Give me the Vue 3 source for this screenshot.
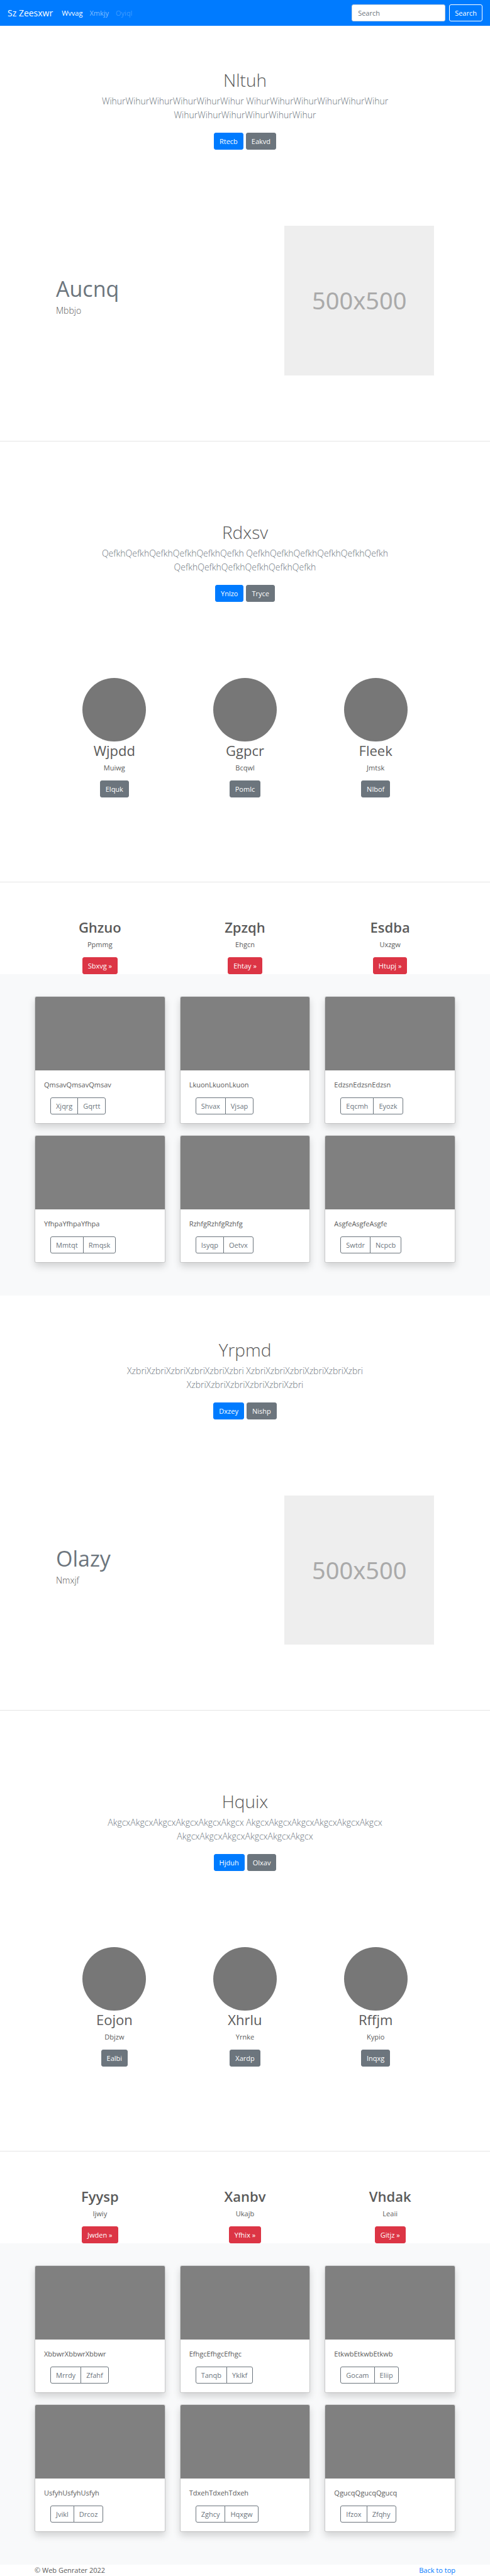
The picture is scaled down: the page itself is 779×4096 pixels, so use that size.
<script setup>
const blocks = [
  {
    hero: { title: 'Nltuh', word: 'Wihur', primary: 'Rtecb', secondary: 'Eakvd' },
    feature: { title: 'Aucnq', text: 'Mbbjo' },
    team: {
      hero: { title: 'Rdxsv', word: 'Qefkh', primary: 'Ynlzo', secondary: 'Tryce' },
      people: [
        { name: 'Wjpdd', text: 'Muiwg', action: 'Elquk' },
        { name: 'Ggpcr', text: 'Bcqwl', action: 'Pomlc' },
        { name: 'Fleek', text: 'Jmtsk', action: 'Nlbof' }
      ]
    },
    topics: [
      { name: 'Ghzuo', text: 'Ppmmg', action: 'Sbxvg' },
      { name: 'Zpzqh', text: 'Ehgcn', action: 'Ehtay' },
      { name: 'Esdba', text: 'Uxzgw', action: 'Htupj' }
    ],
    cards: [
      { word: 'Qmsav', actions: ['Xjqrg', 'Gqrtt'] },
      { word: 'Lkuon', actions: ['Shvax', 'Vjsap'] },
      { word: 'Edzsn', actions: ['Eqcmh', 'Eyozk'] },
      { word: 'Yfhpa', actions: ['Mmtqt', 'Rmqsk'] },
      { word: 'Rzhfg', actions: ['Isyqp', 'Oetvx'] },
      { word: 'Asgfe', actions: ['Swtdr', 'Ncpcb'] }
    ]
  },
  {
    hero: { title: 'Yrpmd', word: 'Xzbri', primary: 'Dxzey', secondary: 'Nishp' },
    feature: { title: 'Olazy', text: 'Nmxjf' },
    team: {
      hero: { title: 'Hquix', word: 'Akgcx', primary: 'Hjduh', secondary: 'Olxav' },
      people: [
        { name: 'Eojon', text: 'Dbjzw', action: 'Ealbi' },
        { name: 'Xhrlu', text: 'Yrnke', action: 'Xardp' },
        { name: 'Rffjm', text: 'Kypio', action: 'Inqxg' }
      ]
    },
    topics: [
      { name: 'Fyysp', text: 'Ijwiy', action: 'Jwden' },
      { name: 'Xanbv', text: 'Ukajb', action: 'Yfhix' },
      { name: 'Vhdak', text: 'Leaii', action: 'Gitjz' }
    ],
    cards: [
      { word: 'Xbbwr', actions: ['Mrrdy', 'Zfahf'] },
      { word: 'Efhgc', actions: ['Tanqb', 'Yklkf'] },
      { word: 'Etkwb', actions: ['Gocam', 'Eliip'] },
      { word: 'Usfyh', actions: ['Jvikl', 'Drcoz'] },
      { word: 'Tdxeh', actions: ['Zghcy', 'Hqxgw'] },
      { word: 'Qgucq', actions: ['Ifzox', 'Zfqhy'] }
    ]
  }
]

const lead = (word) => Array(3).fill(word.repeat(6)).join(' ')
</script>

<template>
  <div id="top" class="page">
    <header class="navbar">
      <a class="brand" href="#top">Sz Zeesxwr</a>
      <nav class="links">
        <a class="link active" href="#top">Wvvag</a>
        <a class="link" href="#top">Xmkjy</a>
        <a class="link disabled" href="#top" aria-disabled="true">Oyiql</a>
      </nav>
      <form class="search" @submit.prevent>
        <input class="field" type="search" placeholder="Search" aria-label="Search" />
        <button class="btn outline-light" type="submit">Search</button>
      </form>
    </header>

    <main>
      <template v-for="block in blocks" :key="block.hero.title">
        <section class="hero">
          <h1 class="title">{{ block.hero.title }}</h1>
          <p class="lead">{{ lead(block.hero.word) }}</p>
          <div class="actions">
            <a class="btn primary" href="#top">{{ block.hero.primary }}</a>
            <a class="btn secondary" href="#top">{{ block.hero.secondary }}</a>
          </div>
        </section>

        <section class="feature">
          <div class="feature-copy">
            <h2 class="feature-title">{{ block.feature.title }}</h2>
            <p class="feature-text">{{ block.feature.text }}</p>
          </div>
          <div class="feature-media">
            <div class="placeholder">500x500</div>
          </div>
        </section>

        <hr class="rule" />

        <section class="hero spaced">
          <h1 class="title">{{ block.team.hero.title }}</h1>
          <p class="lead">{{ lead(block.team.hero.word) }}</p>
          <div class="actions">
            <a class="btn primary" href="#top">{{ block.team.hero.primary }}</a>
            <a class="btn secondary" href="#top">{{ block.team.hero.secondary }}</a>
          </div>
        </section>

        <section class="people">
          <article v-for="p in block.team.people" :key="p.name" class="column">
            <div class="avatar"></div>
            <h2 class="name">{{ p.name }}</h2>
            <p class="text">{{ p.text }}</p>
            <a class="btn secondary" href="#top">{{ p.action }}</a>
          </article>
        </section>

        <hr class="rule" />

        <section class="topics">
          <article v-for="t in block.topics" :key="t.name" class="column">
            <h2 class="name strong">{{ t.name }}</h2>
            <p class="text">{{ t.text }}</p>
            <a class="btn danger" href="#top">{{ t.action }} »</a>
          </article>
        </section>

        <section class="album">
          <article v-for="c in block.cards" :key="c.word" class="card">
            <div class="thumb"></div>
            <div class="card-body">
              <p class="text">{{ c.word.repeat(3) }}</p>
              <div class="group">
                <button v-for="a in c.actions" :key="a" class="btn outline" type="button">{{ a }}</button>
              </div>
            </div>
          </article>
        </section>
      </template>
    </main>

    <footer class="footer">
      <span>© Web Genrater 2022</span>
      <a class="to-top" href="#top">Back to top</a>
    </footer>
  </div>
</template>

<style>
body {
  margin: 0;
  background: #fff;
}
</style>

<style scoped>
.page,
.page * {
  box-sizing: border-box;
}

.page {
  font-family: "Open Sans", "Noto Sans", sans-serif;
  font-size: 11px;
  line-height: 17px;
  color: #5a5a5a;
}

h1,
h2,
p {
  margin: 0;
}

a {
  text-decoration: none;
}

.navbar {
  display: flex;
  align-items: center;
  padding: 7px 12px;
  background: #007bff;
}

.brand {
  margin-right: 14px;
  font-size: 14px;
  color: #fff;
}

.links {
  display: flex;
  flex: 1;
  gap: 11px;
}

.link {
  color: rgba(255, 255, 255, 0.5);
}

.link.active {
  color: #fff;
}

.link.disabled {
  color: rgba(255, 255, 255, 0.25);
}

.search {
  display: flex;
  gap: 6px;
}

.field {
  width: 149px;
  height: 27px;
  padding: 0 9px;
  border: 1px solid #ced4da;
  border-radius: 3px;
  background: #fff;
  font: inherit;
  color: #495057;
  appearance: none;
}

.field::placeholder {
  color: #6c757d;
}

.btn {
  display: inline-block;
  padding: 4px 8px;
  border: 1px solid transparent;
  border-radius: 3px;
  background: transparent;
  font: inherit;
  color: #fff;
}

.btn.primary {
  border-color: #007bff;
  background: #007bff;
}

.btn.secondary {
  border-color: #6c757d;
  background: #6c757d;
}

.btn.danger {
  border-color: #dc3545;
  background: #dc3545;
}

.btn.outline-light {
  border-color: #fff;
}

.btn.outline {
  border-color: #6c757d;
  color: #6c757d;
}

.hero {
  padding: 69px 24px;
  text-align: center;
}

.hero.spaced {
  margin-top: 58px;
}

.title {
  margin-bottom: 6px;
  font-size: 28px;
  font-weight: 300;
  line-height: 34px;
}

.lead {
  max-width: 480px;
  margin: 0 auto 17px;
  font-size: 14px;
  font-weight: 300;
  line-height: 22px;
  color: #6c757d;
}

.actions {
  display: flex;
  justify-content: center;
  gap: 4px;
}

.feature {
  display: grid;
  grid-template-columns: 7fr 5fr;
  align-items: center;
  padding: 52px 78px 104px;
}

.feature-copy,
.feature-media {
  padding: 0 11px;
}

.feature-title {
  margin-bottom: 5px;
  font-size: 34px;
  font-weight: 400;
  line-height: 38px;
  color: #6c757d;
}

.feature-text {
  margin-bottom: 10px;
  font-size: 14px;
  font-weight: 300;
  line-height: 22px;
}

.placeholder {
  display: flex;
  align-items: center;
  justify-content: center;
  aspect-ratio: 1;
  background: #eee;
  font-family: "Noto Sans", sans-serif;
  font-size: 38px;
  color: #aaa;
}

.rule {
  height: 1px;
  margin: 0;
  border: 0;
  background: #e5e5e5;
}

.people {
  display: grid;
  grid-template-columns: repeat(3, 1fr);
  padding: 52px 78px 134px;
}

.topics {
  display: grid;
  grid-template-columns: repeat(3, 1fr);
  gap: 23px;
  padding: 57px 55px 0;
}

.column {
  display: flex;
  flex-direction: column;
  align-items: center;
}

.avatar {
  width: 101px;
  height: 101px;
  border-radius: 50%;
  background: #777;
}

.name {
  margin-bottom: 5px;
  font-size: 22px;
  font-weight: 400;
  line-height: 28px;
}

.name.strong {
  font-weight: 600;
}

.text {
  margin-bottom: 12px;
}

.album {
  display: grid;
  grid-template-columns: repeat(3, 1fr);
  gap: 18px 23px;
  padding: 35px 55px 52px;
  background: #f8f9fa;
}

.card {
  overflow: hidden;
  border: 1px solid rgba(0, 0, 0, 0.125);
  border-radius: 3px;
  background: #fff;
  background-clip: padding-box;
  box-shadow: 0 6px 12px rgba(0, 0, 0, 0.15);
}

.thumb {
  height: 117px;
  background: #808080;
}

.card-body {
  padding: 14px;
}

.group {
  display: flex;
  margin-left: 10px;
}

.group .btn:first-child {
  border-top-right-radius: 0;
  border-bottom-right-radius: 0;
}

.group .btn:last-child {
  margin-left: -1px;
  border-top-left-radius: 0;
  border-bottom-left-radius: 0;
}

.footer {
  display: flex;
  justify-content: space-between;
  padding: 0 55px;
}

.to-top {
  color: #007bff;
}
</style>
